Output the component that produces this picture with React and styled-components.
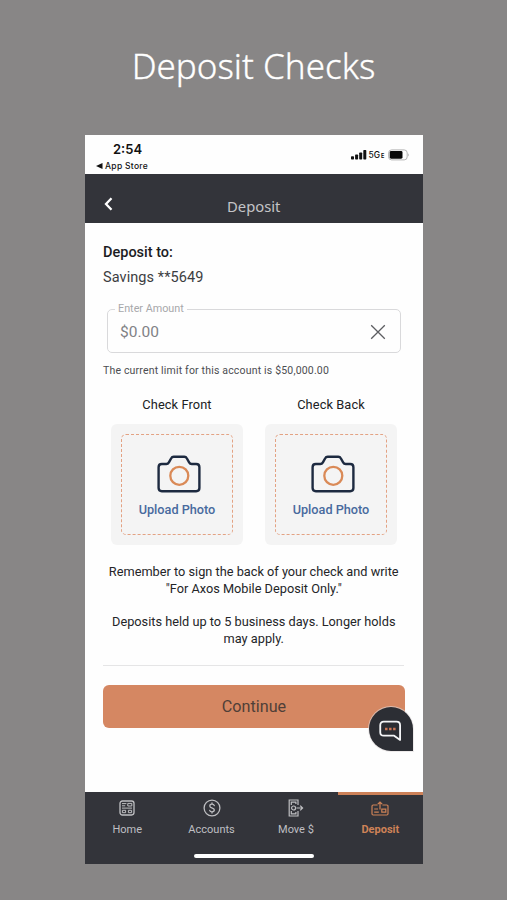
import React from 'react';
import styled, { createGlobalStyle } from 'styled-components';

const checks = ['Check Front', 'Check Back'];

const tabs = [
  { label: 'Home', Icon: HomeIcon },
  { label: 'Accounts', Icon: AccountsIcon },
  { label: 'Move $', Icon: MoveIcon },
  { label: 'Deposit', Icon: DepositIcon, active: true },
];

function HomeIcon() {
  return (
    <svg width="16" height="16" viewBox="0 0 16 16" fill="none" stroke="currentColor">
      <rect x="1" y="1" width="14" height="14" rx="2.4" strokeWidth="1.3" />
      <path d="M3 3.600h4.400M3 5.800h3.200M3 8.100h10M8.800 3.400h4v2.600h-4zM3.400 10.300h3.200v2.400H3.400zM9.400 10.300h3.200v2.400H9.400z" strokeWidth="1" />
    </svg>
  );
}

function AccountsIcon() {
  return (
    <svg width="18" height="18" viewBox="0 0 18 18" fill="none" stroke="currentColor" strokeWidth="1.3" strokeLinecap="round">
      <circle cx="9" cy="9" r="7.9" />
      <path d="M11.300 6.600C11 5.600 10 5.200 9 5.200c-1.300 0-2.200.7-2.200 1.800C6.800 8.300 7.900 8.600 9 9s2.300.7 2.300 2c0 1.100-.9 1.800-2.300 1.800-1.100 0-2-.4-2.300-1.400M9 4v1.200M9 12.800V14" />
    </svg>
  );
}

function MoveIcon() {
  return (
    <svg width="16" height="18" viewBox="0 0 16 18" fill="none" stroke="currentColor" strokeWidth="1.2">
      <path d="M10 6V1H1.200v16H10v-5" />
      <path d="M3.300 6V3.200h4.600V5M3.300 12v2.800h4.600V13" />
      <circle cx="5.600" cy="9" r="2" />
      <path d="M8.500 9h6M12.200 6.600 14.600 9l-2.400 2.400" />
    </svg>
  );
}

function DepositIcon() {
  return (
    <svg width="18" height="15" viewBox="0 0 18 15" fill="none" stroke="currentColor" strokeWidth="1.2">
      <path d="M6.600 4H2.200Q1 4 1 5.200v7.600Q1 14 2.200 14h13.600q1.200 0 1.200-1.200V5.200Q17 4 15.800 4h-4.400" />
      <path d="M9 8.500V1.200M6.800 3.200 9 1l2.200 2.200M3.200 8h3.800M3.200 11.200h4.600M10.800 8.200h4v3h-4z" />
    </svg>
  );
}

function CameraIcon() {
  return (
    <svg width="44" height="38" viewBox="0 0 44 38" fill="none">
      <path
        d="M4.800 9H9.300Q11 9 11.900 7.400L14.200 3.300Q15 1.700 16.700 1.700H27.300Q29 1.700 29.800 3.300L32.100 7.400Q33 9 34.700 9H39.200Q42.400 9 42.400 12.200V33Q42.400 36.200 39.200 36.200H4.800Q1.600 36.200 1.600 33V12.200Q1.600 9 4.800 9Z"
        stroke="#1d2a40"
        strokeWidth="2.400"
      />
      <circle cx="22.300" cy="20.800" r="9" stroke="#da8a57" strokeWidth="2.300" />
    </svg>
  );
}

export default function App() {
  return (
    <Page>
      <GlobalStyle />
      <Title>Deposit Checks</Title>

      <Phone>
        <StatusBar>
          <div>
            <Clock>2:54</Clock>
            <AppStore>
              <svg width="7" height="6" viewBox="0 0 7 6"><path d="M6.500 0v6L0 3z" fill="#111" /></svg>
              App Store
            </AppStore>
          </div>
          <Signals>
            <svg width="16" height="10" viewBox="0 0 16 10" fill="#111">
              <rect x="0" y="6.300" width="3" height="3.200" rx=".7" />
              <rect x="4.100" y="4.600" width="3" height="4.900" rx=".7" />
              <rect x="8.200" y="2.500" width="3" height="7" rx=".7" />
              <rect x="12.300" y="0" width="3" height="9.500" rx=".7" />
            </svg>
            <Network>5G<small>E</small></Network>
            <svg width="22" height="12" viewBox="0 0 22 12">
              <rect x=".6" y=".9" width="18.600" height="10" rx="3" fill="none" stroke="#b4b4b4" />
              <rect x="1.700" y="2.100" width="12.800" height="7.600" rx="1.400" fill="#080808" />
              <path d="M20.200 4.200q1.400 1.700 0 3.400z" fill="#999" />
            </svg>
          </Signals>
        </StatusBar>

        <Header>
          <BackButton aria-label="Back">
            <svg width="9" height="14" viewBox="0 0 9 14" fill="none" stroke="#fff" strokeWidth="2.300">
              <path d="M7.500 1.200 2 7l5.500 5.800" />
            </svg>
          </BackButton>
          <HeaderTitle>Deposit</HeaderTitle>
        </Header>

        <Content>
          <DepositTo>Deposit to:</DepositTo>
          <Account>Savings **5649</Account>

          <AmountField>
            <legend>Enter Amount</legend>
            <span>$0.00</span>
            <svg width="16" height="16" viewBox="0 0 16 16" stroke="#5c5d61" strokeWidth="1.300">
              <path d="m1.200 1.200 13.600 13.600M14.800 1.200 1.200 14.800" />
            </svg>
          </AmountField>
          <Limit>The current limit for this account is $50,000.00</Limit>

          <Checks>
            {checks.map(name => (
              <div key={name}>
                <CheckName>{name}</CheckName>
                <UploadCard>
                  <UploadArea>
                    <CameraIcon />
                    <span>Upload Photo</span>
                  </UploadArea>
                </UploadCard>
              </div>
            ))}
          </Checks>

          <Note>
            Remember to sign the back of your check and write<br />
            "For Axos Mobile Deposit Only."
          </Note>
          <Note>
            Deposits held up to 5 business days. Longer holds<br />
            may apply.
          </Note>

          <Divider />
          <Continue>Continue</Continue>

          <ChatBubble aria-label="Chat">
            <svg width="23" height="22" viewBox="0 0 24 22" fill="none">
              <path
                d="M5 1.300h13.300q3.700 0 3.700 3.700V20.300l-6.200-4.400H5q-3.700 0-3.700-3.700V5Q1.300 1.300 5 1.300Z"
                stroke="#f5f6f8"
                strokeWidth="1.900"
                strokeLinejoin="round"
              />
              <path d="M6.300 7.500h2.600v2.600H6.300zM10.500 7.500h2.600v2.600h-2.600zM14.700 7.500h2.600v2.600h-2.600z" fill="#cd7656" />
            </svg>
          </ChatBubble>
        </Content>

        <TabBar>
          {tabs.map(({ label, Icon, active }) => (
            <Tab key={label} $active={active}>
              <IconSlot><Icon /></IconSlot>
              {label}
            </Tab>
          ))}
          <HomeIndicator />
        </TabBar>
      </Phone>
    </Page>
  );
}

const GlobalStyle = createGlobalStyle`
  * { box-sizing: border-box; }
  body {
    margin: 0;
    background: #888686;
  }
`;

const Page = styled.div`
  width: 507px;
  height: 900px;
  display: flex;
  flex-direction: column;
  background: #888686;
  font-family: Roboto, sans-serif;
  overflow: hidden;
`;

const Title = styled.h1`
  height: 135px;
  margin: 0;
  flex-shrink: 0;
  text-align: center;
  font: 300 35px/131px 'Noto Sans', sans-serif;
  color: #fff;
  -webkit-text-stroke: 0.3px #fff;
  white-space: nowrap;
`;

const Phone = styled.main`
  width: 337.500px;
  height: 729px;
  margin-left: 85px;
  display: flex;
  flex-direction: column;
  background: #fefefe;
`;

const StatusBar = styled.div`
  height: 39px;
  display: flex;
  justify-content: space-between;
  padding: 6px 13px 0 11px;
  flex-shrink: 0;
  font-family: Inter, sans-serif;
  color: #111;
`;

const Clock = styled.div`
  padding-left: 17px;
  font-size: 13px;
  line-height: 17px;
  font-weight: 600;
`;

const AppStore = styled.div`
  display: flex;
  align-items: center;
  gap: 2px;
  font-size: 8.500px;
  line-height: 16px;
  font-weight: 500;
  letter-spacing: 0.3px;
`;

const Signals = styled.div`
  height: 28px;
  display: flex;
  align-items: center;
  gap: 2px;
`;

const Network = styled.span`
  width: 17px;
  font-size: 8.500px;
  font-weight: 500;
  white-space: nowrap;

  small { margin-left: 1px; font-size: 5.500px; font-weight: 700; }
`;

const Header = styled.header`
  height: 49px;
  flex-shrink: 0;
  display: grid;
  grid-template-columns: 48px 1fr 48px;
  align-items: center;
  padding-top: 11px;
  background: #33343a;
`;

const BackButton = styled.button`
  display: flex;
  padding: 0 0 1px 19px;
  border: 0;
  background: none;
`;

const HeaderTitle = styled.div`
  padding-top: 4px;
  text-align: center;
  font: 400 14.800px/20px 'Noto Sans', sans-serif;
  color: #c4c4c7;
`;

const Content = styled.section`
  position: relative;
  height: 569px;
  flex-shrink: 0;
  display: flex;
  flex-direction: column;
  padding: 19px 18px 0;
`;

const DepositTo = styled.div`
  font-size: 14.500px;
  line-height: 22px;
  font-weight: 500;
  color: #1c1c1f;
`;

const Account = styled.div`
  margin-top: 2px;
  font-size: 14.500px;
  line-height: 23px;
  letter-spacing: 0.08px;
  color: #3c3d41;
`;

const AmountField = styled.fieldset`
  height: 50px;
  margin: 14px 3.500px 0 4px;
  padding: 8px 14px 0 12px;
  display: flex;
  align-items: center;
  justify-content: space-between;
  border: 1px solid #d9d9db;
  border-radius: 5px;
  color: #818286;
  font-size: 15.500px;

  legend {
    margin-left: -5px;
    padding: 0 3px;
    font-size: 10.800px;
    line-height: 12px;
    color: #a7a8ab;
  }
`;

const Limit = styled.div`
  margin-top: 9px;
  font-size: 10.500px;
  line-height: 17px;
  letter-spacing: 0.18px;
  color: #4c4d51;
`;

const Checks = styled.div`
  display: flex;
  gap: 22px;
  margin: 17px 0 18px 8px;
`;

const CheckName = styled.div`
  text-align: center;
  font-size: 12.800px;
  line-height: 18px;
  letter-spacing: 0.1px;
  color: #202124;
`;

const UploadCard = styled.div`
  width: 132px;
  height: 121px;
  margin-top: 10px;
  padding: 10px;
  border-radius: 6px;
  background: #f4f4f4;
`;

const UploadArea = styled.div`
  height: 101px;
  display: flex;
  flex-direction: column;
  align-items: center;
  padding-top: 20px;
  border: 1px dashed #e3a283;
  border-radius: 5px;
  font-size: 12.700px;
  line-height: 16px;
  font-weight: 500;
  color: #486a9e;

  svg { margin-left: 3px; }
  span { margin-top: 9px; }
`;

const Note = styled.p`
  margin: 0 -10px 17px;
  text-align: center;
  font-size: 12.750px;
  line-height: 16.500px;
  color: #242528;

  ${Checks} + & { margin-top: 1px; }
`;

const Divider = styled.hr`
  width: 301px;
  height: 1px;
  margin: 1px 0 19px;
  border: 0;
  background: #e5e5e6;
`;

const Continue = styled.button`
  width: 302px;
  height: 43px;
  padding: 1px 0 0;
  border: 0;
  border-radius: 6px;
  background: #d58762;
  font: 400 16.200px/42px Roboto, sans-serif;
  color: #503f38;
`;

// Floats over the lower right corner of the continue button
const ChatBubble = styled.button`
  position: absolute;
  right: 10px;
  bottom: 41px;
  width: 44px;
  height: 44px;
  padding: 3px 0 0;
  display: flex;
  align-items: center;
  justify-content: center;
  border: 0;
  border-radius: 22px 22px 0 22px;
  background: #2c2e34;
  box-shadow: 0 0 0 1px rgba(225, 220, 220, 0.6);
`;

const TabBar = styled.nav`
  position: relative;
  height: 72px;
  flex-shrink: 0;
  display: grid;
  grid-template-columns: repeat(4, 1fr);
  background: #33343a;
`;

const Tab = styled.div`
  display: flex;
  flex-direction: column;
  align-items: center;
  padding-top: 3px;
  border-top: 3px solid ${({ $active }) => ($active ? '#cd8158' : 'transparent')};
  font-size: 11px;
  line-height: 16px;
  font-weight: ${({ $active }) => ($active ? 700 : 400)};
  color: ${({ $active }) => ($active ? '#ce8257' : '#bfbfc2')};
`;

const IconSlot = styled.div`
  height: 20px;
  margin-bottom: 4px;
  display: flex;
  align-items: center;
`;

const HomeIndicator = styled.div`
  position: absolute;
  left: 109px;
  bottom: 6px;
  width: 120px;
  height: 4px;
  border-radius: 2px;
  background: #fff;
`;
